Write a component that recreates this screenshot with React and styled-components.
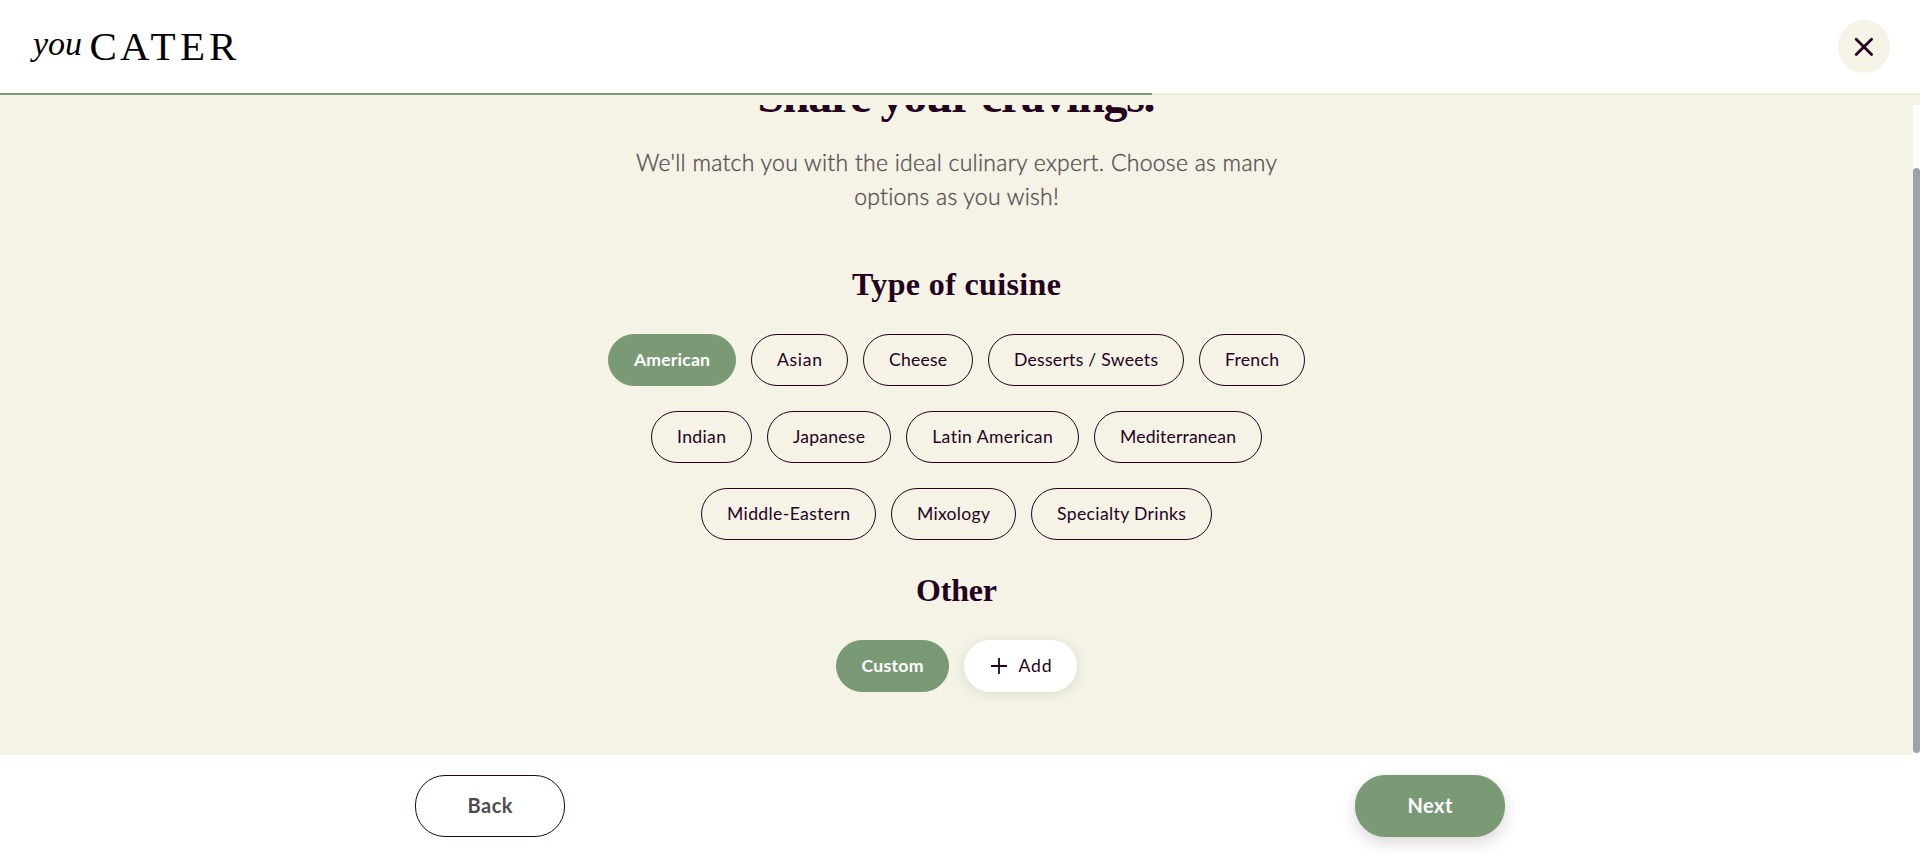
import React, { useLayoutEffect, useRef, useState } from "react";
import styled, { createGlobalStyle, css } from "styled-components";

const ink = "#24031f";
const green = "#7a9a76";
const cream = "#f5f2e6";

const GlobalStyle = createGlobalStyle`
  *, *::before, *::after { box-sizing: border-box; }
  body { margin: 0; background: #fff; font-family: Lato, "Open Sans", sans-serif; color: ${ink}; }
  h1, h2, p { margin: 0; }
  button { font: inherit; color: inherit; cursor: pointer; }
`;

const Page = styled.div`
  display: flex;
  flex-direction: column;
  height: 857px;
  overflow: hidden;
`;

const Header = styled.header`
  flex: none;
  height: 93px;
  padding: 0 30px 0 24px;
  display: flex;
  align-items: center;
  justify-content: space-between;
  background: #fff;
`;

const LogoMark = styled.svg`
  display: block;
  font-family: "Liberation Serif", serif;
  fill: #000;
`;

const CloseButton = styled.button`
  width: 52px;
  height: 53px;
  padding: 0;
  border: 0;
  border-radius: 50%;
  background: ${cream};
  display: flex;
  align-items: center;
  justify-content: center;
`;

const ProgressTrack = styled.div`
  flex: none;
  height: 2px;
  background: #f0edda;
`;

const ProgressBar = styled.div`
  width: 60%;
  height: 100%;
  background: ${green};
`;

const Main = styled.main`
  flex: 1;
  min-height: 0;
  padding-top: 10px;
  display: flex;
  background: ${cream};
`;

const Viewport = styled.div`
  flex: 1;
  overflow: hidden;
`;

const Content = styled.div`
  margin-top: -39px;
  display: flex;
  flex-direction: column;
  align-items: center;
`;

const ScrollTrack = styled.div`
  flex: none;
  width: 7px;
  padding: 63px 0 2px;
  display: flex;
  background: #fff;
`;

const ScrollThumb = styled.div`
  flex: 1;
  border-radius: 4px;
  background: #9ba3aa;
`;

const Title = styled.h1`
  font: bold 48px/60px "Liberation Serif", serif;
  white-space: nowrap;
`;

const Lead = styled.p`
  margin-top: 19px;
  font-size: 23px;
  font-weight: 300;
  line-height: 34px;
  text-align: center;
  color: #554f53;
  -webkit-text-stroke: 0.35px #554f53;
`;

const Line = styled.span`
  display: block;
`;

const SectionTitle = styled.h2`
  margin: ${(p) => p.$top}px 0 30px;
  font: bold 32px/40px "Liberation Serif", serif;
`;

const ChipRows = styled.div`
  display: flex;
  flex-direction: column;
  align-items: center;
  gap: 25px;
`;

const ChipRow = styled.div`
  display: flex;
  gap: 15px;
`;

const Chip = styled.button`
  width: ${(p) => p.$width}px;
  height: 52px;
  padding: 0 0 2px;
  border: 1px solid ${ink};
  border-radius: 30px;
  background: transparent;
  display: flex;
  align-items: center;
  justify-content: center;
  font-size: 17.6px;
  ${(p) => p.$selected && css`
    border-color: ${green};
    background: ${green};
    color: #fff;
    font-weight: 700;
  `}
  ${(p) => p.$raised && css`
    padding-left: 1px;
    border-color: #fff;
    background: #fff;
    gap: 12px;
    box-shadow: 0 2px 12px rgba(122, 154, 118, 0.22);
  `}
`;

const PlusIcon = styled.svg`
  display: block;
  margin-top: 2px;
`;

const Footer = styled.footer`
  flex: none;
  height: 102px;
  padding-top: 20px;
  display: flex;
  justify-content: center;
  background: #fff;
`;

const FooterInner = styled.div`
  width: 1090px;
  display: flex;
  justify-content: space-between;
`;

const NavButton = styled.button`
  width: 150px;
  height: 62px;
  padding: 0 0 3px;
  border: 1px solid ${(p) => (p.$primary ? green : ink)};
  border-radius: 30px;
  background: ${(p) => (p.$primary ? green : "#fff")};
  color: ${(p) => (p.$primary ? "#fff" : "#504b4f")};
  font-size: 20px;
  font-weight: 700;
  box-shadow: ${(p) => (p.$primary ? "0 6px 16px rgba(36, 3, 31, 0.16)" : "none")};
`;

const Fitted = styled.span`
  display: inline-block;
  white-space: nowrap;
`;

// Tracks a label out (or in) so that it spans the given width.
function Fit({ width, children }) {
  const ref = useRef(null);
  const [spacing, setSpacing] = useState(0);
  useLayoutEffect(() => {
    const natural = ref.current.getBoundingClientRect().width;
    setSpacing((width - natural) / (children.length - 1));
  }, []);
  return (
    <Fitted ref={ref} style={{ letterSpacing: spacing, marginRight: -spacing }}>
      {children}
    </Fitted>
  );
}

const cuisines = [
  [["American", 128, true], ["Asian", 97], ["Cheese", 110], ["Desserts / Sweets", 196], ["French", 106]],
  [["Indian", 101], ["Japanese", 124], ["Latin American", 173], ["Mediterranean", 168]],
  [["Middle-Eastern", 175], ["Mixology", 125], ["Specialty Drinks", 181]],
];

function Logo() {
  return (
    <LogoMark width="216" height="60" viewBox="24 16 216 60" role="img" aria-label="you CATER">
      <text x="33" y="54" fontSize="34" fontStyle="italic" textLength="49">you</text>
      <text x="89.5 120 150.5 180 209" y="59" fontSize="41">CATER</text>
    </LogoMark>
  );
}

export default function App() {
  return (
    <Page>
      <GlobalStyle />
      <Header>
        <Logo />
        <CloseButton aria-label="Close">
          <svg width="20" height="20" viewBox="0 0 20 20" fill="none" stroke={ink} strokeWidth="2.8" strokeLinecap="round">
            <path d="M2.2 2.2 17.6 17.6M17.6 2.2 2.2 17.6" />
          </svg>
        </CloseButton>
      </Header>
      <ProgressTrack>
        <ProgressBar />
      </ProgressTrack>
      <Main>
        <Viewport>
          <Content>
            <Title><Fit width={398}>Share your cravings.</Fit></Title>
            <Lead>
              <Line><Fit width={641}>We'll match you with the ideal culinary expert. Choose as many</Fit></Line>
              <Line><Fit width={205}>options as you wish!</Fit></Line>
            </Lead>
            <SectionTitle $top={51}><Fit width={209}>Type of cuisine</Fit></SectionTitle>
            <ChipRows>
              {cuisines.map((row) => (
                <ChipRow key={row[0][0]}>
                  {row.map(([name, width, selected]) => (
                    <Chip key={name} $width={width} $selected={selected}>
                      <Fit width={width - 52}>{name}</Fit>
                    </Chip>
                  ))}
                </ChipRow>
              ))}
            </ChipRows>
            <SectionTitle $top={30}><Fit width={81}>Other</Fit></SectionTitle>
            <ChipRow>
              <Chip $width={113} $selected><Fit width={62}>Custom</Fit></Chip>
              <Chip $width={113} $raised>
                <PlusIcon width="16" height="16" viewBox="0 0 16 16" stroke={ink} strokeWidth="1.8">
                  <path d="M8 0V16M0 8H16" />
                </PlusIcon>
                <Fit width={33}>Add</Fit>
              </Chip>
            </ChipRow>
          </Content>
        </Viewport>
        <ScrollTrack>
          <ScrollThumb />
        </ScrollTrack>
      </Main>
      <Footer>
        <FooterInner>
          <NavButton><Fit width={45}>Back</Fit></NavButton>
          <NavButton $primary><Fit width={45}>Next</Fit></NavButton>
        </FooterInner>
      </Footer>
    </Page>
  );
}
